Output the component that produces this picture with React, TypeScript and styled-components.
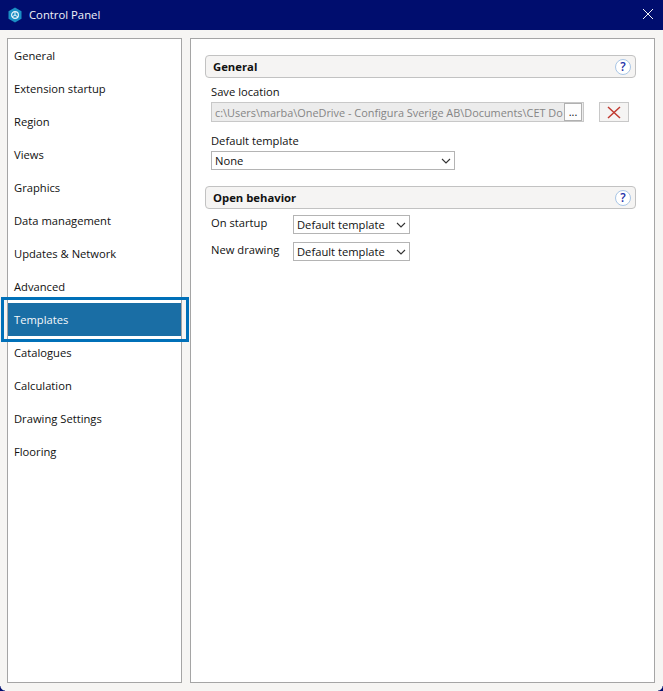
import React from 'react';
import styled, { createGlobalStyle } from 'styled-components';

const GlobalStyle = createGlobalStyle`
  html, body { margin: 0; padding: 0; background: #f6f5f3; }
  body { font-family: "Open Sans", "Noto Sans", sans-serif; font-size: 11.2px; color: #111; }
  * { box-sizing: border-box; }
`;

const Window = styled.div`
  position: relative;
  width: 663px;
  height: 691px;
  display: flex;
  flex-direction: column;
  overflow: hidden;

  &::before, &::after {
    content: '';
    position: absolute;
    bottom: 0;
    width: 5px;
    height: 5px;
  }
  &::before {
    left: 0;
    background: radial-gradient(circle at 100% 0, transparent 4px, #000d6e 5px);
  }
  &::after {
    right: 0;
    background: radial-gradient(circle at 0 0, transparent 4px, #000d6e 5px);
  }
`;

const TitleBar = styled.header`
  height: 30px;
  flex: none;
  display: flex;
  align-items: center;
  padding: 0 9px 1px 7px;
  background: #000d6e;
  color: #f2f3f8;
`;

const AppIcon = styled.svg`
  width: 16px;
  height: 16px;
  margin-right: 6px;
`;

const Title = styled.span`
  flex: 1;
  font-size: 11.3px;
`;

const CloseIcon = styled.svg`
  width: 12px;
  height: 12px;
  margin-top: -1px;
`;

const Body = styled.main`
  flex: 1;
  display: flex;
  gap: 8px;
  padding: 8px 8px 8px 7px;
`;

const Sidebar = styled.ul`
  width: 175px;
  flex: none;
  margin: 0;
  padding: 0;
  list-style: none;
  background: #fff;
  border: 1px solid #a5a5a5;
`;

const NavItem = styled.li<{ $active?: boolean }>`
  position: relative;
  height: 33px;
  display: flex;
  align-items: center;
  padding-left: 6px;
  background: ${p => (p.$active ? '#1a6ea5' : 'transparent')};
  color: ${p => (p.$active ? '#f4f8fb' : '#111')};

  ${p => p.$active && `
    &::after {
      content: '';
      position: absolute;
      inset: -6px -8px -6px -7px;
      border: 3px solid #0070b8;
    }
  `}
`;

const Content = styled.section`
  flex: 1;
  background: #fff;
  border: 1px solid #a5a5a5;
  padding: 16px 18px 0 14px;
`;

const SectionHeader = styled.div`
  height: 23px;
  display: flex;
  align-items: center;
  justify-content: space-between;
  padding: 0 4px 0 7px;
  background: #f5f4f3;
  border: 1px solid #c2c2c2;
  border-radius: 4px;
  font-weight: 700;
  font-size: 11.3px;
`;

const HelpIcon = styled.span`
  width: 16px;
  height: 16px;
  display: flex;
  align-items: center;
  justify-content: center;
  background: #fff;
  border: 1.5px solid #a9c6e6;
  border-radius: 50%;
  color: #1a2fa8;
  font-size: 12px;
  font-weight: 600;
`;

const SectionBody = styled.div`
  padding: 6px 0 0 6px;
  margin-bottom: 16px;
`;

const Label = styled.div`
  height: 18px;
  line-height: 15px;
`;

const PathRow = styled.div`
  display: flex;
  align-items: center;
  margin-bottom: 11px;
`;

const PathField = styled.div`
  width: 373px;
  height: 20px;
  display: flex;
  align-items: center;
  gap: 2px;
  padding: 0 1px 0 3px;
  background: #ececec;
  border: 1px solid #c8c8c8;
  color: #858585;
  font-size: 10.9px;
  white-space: nowrap;
`;

const PathText = styled.span`
  flex: 1;
  min-width: 0;
`;

const BrowseButton = styled.button`
  width: 18px;
  height: 18px;
  flex: none;
  padding: 0 0 4px;
  background: #fdfdfd;
  border: 1px solid #b0b0b0;
  font: inherit;
  color: #111;
`;

const ClearButton = styled.button`
  width: 30px;
  height: 20px;
  margin-left: 15px;
  padding: 0;
  display: flex;
  align-items: center;
  justify-content: center;
  background: #f5f4f3;
  border: 1px solid #c8c8c8;
`;

const Select = styled.div<{ $width: number }>`
  width: ${p => p.$width}px;
  height: 19px;
  display: flex;
  align-items: center;
  justify-content: space-between;
  padding: 0 3px 0 3px;
  background: #fff;
  border: 1px solid #b4b4b4;
`;

const Chevron = styled.svg`
  width: 10px;
  height: 6px;
`;

const OptionRow = styled.div`
  display: flex;
  align-items: flex-start;
  height: 27px;
`;

const OptionLabel = styled.div`
  width: 82px;
  line-height: 16px;
`;

const navItems = [
  'General', 'Extension startup', 'Region', 'Views', 'Graphics', 'Data management',
  'Updates & Network', 'Advanced', 'Templates', 'Catalogues', 'Calculation',
  'Drawing Settings', 'Flooring',
];

const Arrow = () => (
  <Chevron viewBox="0 0 10 6">
    <path d="M1 1l4 4 4-4" fill="none" stroke="#333" strokeWidth="1.1" />
  </Chevron>
);

export default function App(): JSX.Element {
  return (
    <Window>
      <GlobalStyle />
      <TitleBar>
        <AppIcon viewBox="0 0 16 16">
          <path d="M8 .5l6.5 3.7v7.6L8 15.5l-6.5-3.7V4.2z" fill="#1b8fc4" />
          <circle cx="8" cy="8" r="3.4" fill="none" stroke="#e8f4fa" strokeWidth="1.2" />
          <path d="M8 4.6V8M8 8l3 2M8 8l-3 2" stroke="#e8f4fa" strokeWidth="1" />
        </AppIcon>
        <Title>Control Panel</Title>
        <CloseIcon viewBox="0 0 12 12">
          <path d="M1 1l10 10M11 1L1 11" stroke="#f2f3f8" strokeWidth="1" />
        </CloseIcon>
      </TitleBar>
      <Body>
        <Sidebar>
          {navItems.map(item => (
            <NavItem key={item} $active={item === 'Templates'}>{item}</NavItem>
          ))}
        </Sidebar>
        <Content>
          <SectionHeader>General<HelpIcon>?</HelpIcon></SectionHeader>
          <SectionBody>
            <Label>Save location</Label>
            <PathRow>
              <PathField>
                <PathText>c:\Users\marba\OneDrive - Configura Sverige AB\Documents\CET Do</PathText>
                <BrowseButton>...</BrowseButton>
              </PathField>
              <ClearButton>
                <svg width="14" height="13" viewBox="0 0 14 13">
                  <path d="M1 1l12 11M13 1L1 12" stroke="#c0392f" strokeWidth="1.5" />
                </svg>
              </ClearButton>
            </PathRow>
            <Label>Default template</Label>
            <Select $width={244}>None<Arrow /></Select>
          </SectionBody>
          <SectionHeader>Open behavior<HelpIcon>?</HelpIcon></SectionHeader>
          <SectionBody>
            <OptionRow>
              <OptionLabel>On startup</OptionLabel>
              <Select $width={117}>Default template<Arrow /></Select>
            </OptionRow>
            <OptionRow>
              <OptionLabel>New drawing</OptionLabel>
              <Select $width={117}>Default template<Arrow /></Select>
            </OptionRow>
          </SectionBody>
        </Content>
      </Body>
    </Window>
  );
}
